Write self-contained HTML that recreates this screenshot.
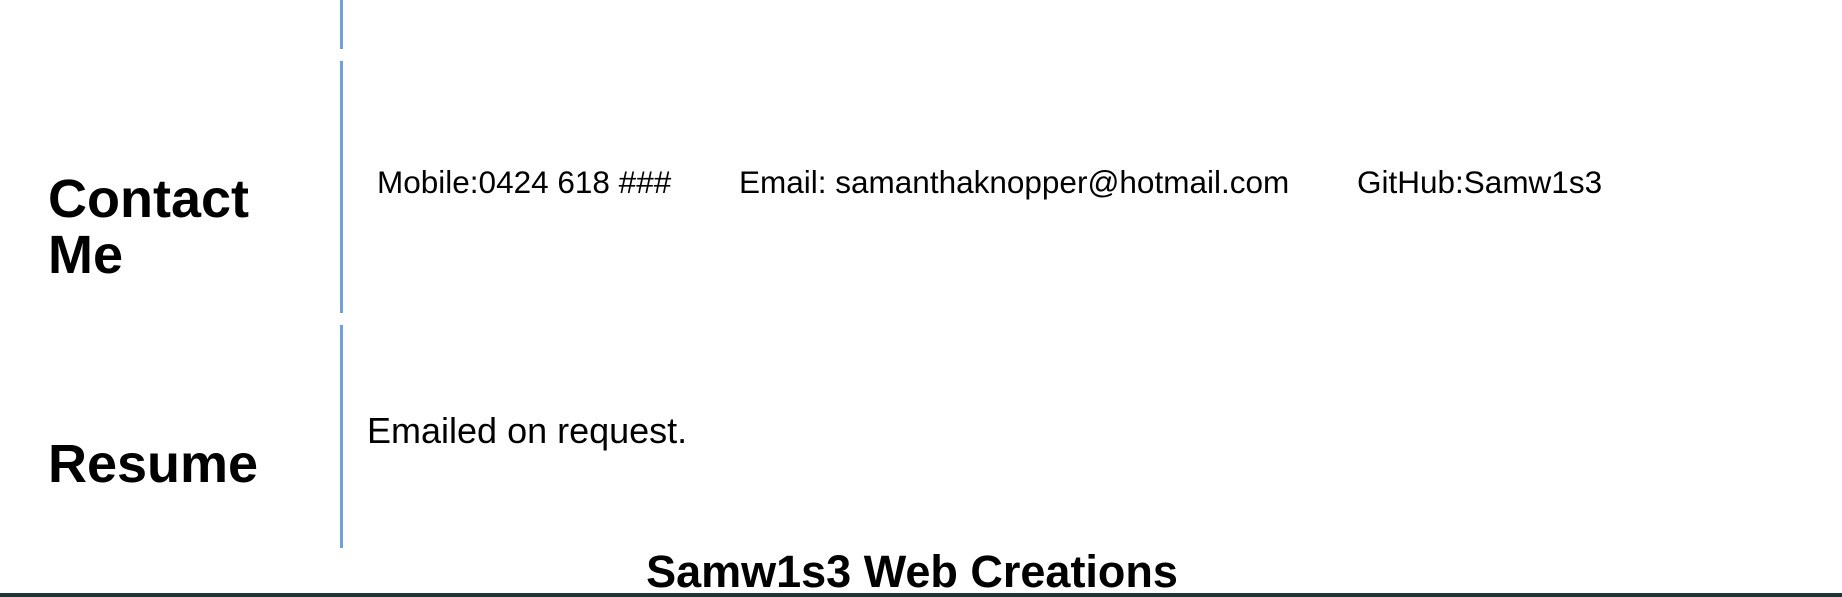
<!DOCTYPE html>
<html><head><meta charset="utf-8"><style>
html,body{margin:0;padding:0;background:#fff;width:1842px;height:597px;overflow:hidden;position:relative;font-family:"Liberation Sans",Arial,sans-serif;color:#000}
.t{position:absolute;line-height:1;white-space:nowrap}
.b{font-weight:bold}
.v{position:absolute;left:340px;width:3px;background:#6fa0d6}
</style></head><body>
<div class="v" style="top:0;height:49px"></div>
<div class="v" style="top:61px;height:252px"></div>
<div class="v" style="top:325px;height:223px"></div>

<div class="t b" style="left:48px;top:172px;font-size:54px">Contact</div>
<div class="t b" style="left:48px;top:228px;font-size:54px">Me</div>
<div class="t b" style="left:48px;top:437px;font-size:54px">Resume</div>

<div class="t" style="left:377px;top:167px;font-size:31.5px">Mobile:0424 618 ###</div>
<div class="t" style="left:739px;top:167px;font-size:31.5px">Email: samanthaknopper@hotmail.com</div>
<div class="t" style="left:1357px;top:167px;font-size:31.5px">GitHub:Samw1s3</div>

<div class="t" style="left:367px;top:413px;font-size:36px">Emailed on request.</div>

<div class="t b" style="left:0;width:1824px;text-align:center;top:549px;font-size:45px">Samw1s3 Web Creations</div>
<div style="position:absolute;left:0;top:593px;width:1842px;height:4px;background:#1e3535"></div>
</body></html>
